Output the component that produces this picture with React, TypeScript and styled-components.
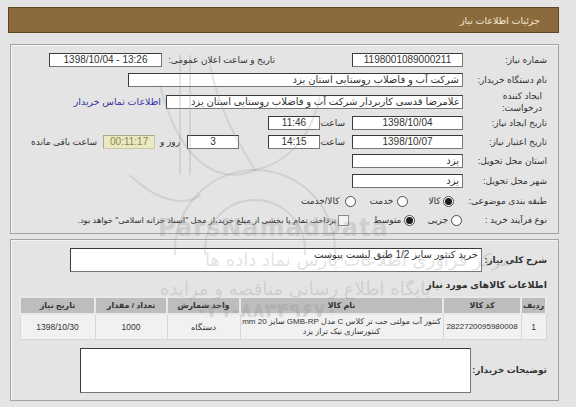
import React from "react";
import styled, { createGlobalStyle } from "styled-components";

const GlobalStyle = createGlobalStyle`
  html, body { margin: 0; padding: 0; background: #e4e4e4; }
  body {
    font-family: "Liberation Sans", "DejaVu Sans", Tahoma, sans-serif;
    font-size: 9px;
    color: #333;
  }
  * { box-sizing: border-box; }
`;

const Page = styled.div`
  position: relative;
  width: 576px;
  height: 407px;
  padding: 7px 17px 0 8px;
  direction: rtl;
  overflow: hidden;
`;

const Header = styled.div`
  height: 26px;
  background: #8b6b3e;
  border: 1px solid #5f4626;
  color: #f3ead6;
  display: flex;
  align-items: center;
  padding-right: 18px;
  font-size: 9.5px;
`;

const Panel = styled.div<{ $mt: number; $pt: number; $pb: number }>`
  margin-top: ${(p) => p.$mt}px;
  margin-left: 2px;
  border: 1px solid #a3a3a3;
  box-shadow: inset 1px 1px 0 #f4f4f4;
  padding: ${(p) => p.$pt}px 11px ${(p) => p.$pb}px 10px;
`;

const Row = styled.div<{ $h: number; $mt?: number }>`
  display: flex;
  align-items: center;
  height: ${(p) => p.$h}px;
  margin-top: ${(p) => p.$mt ?? 0}px;
`;

const Label = styled.div<{ $w?: number; $mr?: number; $bold?: boolean }>`
  flex: none;
  ${(p) => (p.$w ? `width: ${p.$w}px;` : "")}
  margin-right: ${(p) => p.$mr ?? 0}px;
  text-align: right;
  white-space: nowrap;
  line-height: 12px;
  font-weight: ${(p) => (p.$bold ? "bold" : "normal")};
  color: #333;
`;

const TwoLine = styled.div`
  flex: none;
  width: 84px;
  padding-right: 5px;
  text-align: right;
  line-height: 12px;
`;

const Field = styled.div<{
  $w: number;
  $h?: number;
  $mr?: number;
  $align?: "center" | "right" | "left";
  $ltr?: boolean;
  $tone?: "timer";
}>`
  flex: none;
  width: ${(p) => p.$w}px;
  height: ${(p) => p.$h ?? 14}px;
  margin-right: ${(p) => p.$mr ?? 0}px;
  background: ${(p) => (p.$tone === "timer" ? "#e9e9c3" : "#fff")};
  color: ${(p) => (p.$tone === "timer" ? "#8a8a4a" : "#333")};
  border: 1px solid ${(p) => (p.$tone === "timer" ? "#a9a98a" : "#3a3a3a")};
  border-bottom-color: ${(p) => (p.$tone === "timer" ? "#c9c9a9" : "#777")};
  border-right-color: ${(p) => (p.$tone === "timer" ? "#c9c9a9" : "#777")};
  font-size: 10px;
  line-height: 12px;
  text-align: ${(p) => p.$align ?? "center"};
  direction: ${(p) => (p.$ltr ? "ltr" : "rtl")};
  padding: 0 3px;
  white-space: nowrap;
  overflow: hidden;
`;

const Link = styled.a`
  flex: none;
  margin-right: 5px;
  color: #3434a6;
  text-decoration: none;
  white-space: nowrap;
  font-size: 9.5px;
`;

const Radio = styled.span<{ $on?: boolean; $mr?: number }>`
  flex: none;
  width: 11px;
  height: 11px;
  margin-right: ${(p) => p.$mr ?? 0}px;
  border-radius: 50%;
  border: 1px solid #4a4a4a;
  background: #fff;
  display: inline-flex;
  align-items: center;
  justify-content: center;
  &::after {
    content: "";
    width: 7px;
    height: 7px;
    border-radius: 50%;
    background: ${(p) => (p.$on ? "#1c1c1c" : "transparent")};
  }
`;

const Check = styled.span<{ $mr?: number }>`
  flex: none;
  width: 11px;
  height: 11px;
  margin-right: ${(p) => p.$mr ?? 0}px;
  border: 1px solid #8a8a8a;
  background: #f3f3f3;
`;

const Opt = styled.span<{ $mr?: number; $small?: boolean }>`
  flex: none;
  margin-right: ${(p) => p.$mr ?? 3}px;
  white-space: nowrap;
  font-size: ${(p) => (p.$small ? "8.3px" : "9px")};
`;

const Heading = styled.div`
  margin-top: 6px;
  height: 14px;
  line-height: 14px;
  font-weight: bold;
  font-size: 9.5px;
  text-align: right;
`;

const Table = styled.table`
  margin-top: 4px;
  width: 526px;
  table-layout: fixed;
  border-collapse: collapse;
  border: 1px solid #d2d2d2;
  font-size: 8.5px;
`;

const Th = styled.th<{ $w: number }>`
  width: ${(p) => p.$w}px;
  height: 17px;
  background: #bdbdbd;
  border: 2px solid #e9e9e9;
  font-weight: bold;
  font-size: 8px;
  color: #333;
  padding: 0;
  text-align: center;
  white-space: nowrap;
`;

const Td = styled.td<{ $small?: boolean }>`
  height: 25px;
  background: #f1f1f1;
  border: 1px solid #d6d6d6;
  text-align: center;
  padding: 0;
  line-height: 10px;
  font-size: ${(p) => (p.$small ? "8px" : "8.5px")};
  white-space: nowrap;
`;

const Watermark = styled.div`
  position: absolute;
  inset: 0;
  pointer-events: none;
`;

const WmText = styled.div<{ $x: number; $y: number; $size: number; $bold?: boolean; $ltr?: boolean }>`
  position: absolute;
  left: ${(p) => p.$x}px;
  top: ${(p) => p.$y}px;
  font-family: "DejaVu Sans", sans-serif;
  font-size: ${(p) => p.$size}px;
  font-weight: ${(p) => (p.$bold ? "bold" : "normal")};
  direction: ${(p) => (p.$ltr ? "ltr" : "rtl")};
  color: rgba(140, 140, 140, 0.26);
  white-space: nowrap;
  letter-spacing: ${(p) => (p.$ltr ? "1px" : "0")};
`;

const Logo = styled.svg`
  position: absolute;
  left: 120px;
  top: 55px;
`;

export default function App() {
  return (
    <>
      <GlobalStyle />
      <Page>
        <Header>جزئیات اطلاعات نیاز</Header>

        <Panel $mt={11} $pt={5} $pb={4}>
          <Row $h={20}>
            <Label $w={84}>شماره نیاز:</Label>
            <Field $w={111}>1198001089000211</Field>
            <Label $w={113} $mr={77}>تاریخ و ساعت اعلان عمومی:</Label>
            <Field $w={113} $ltr>1398/10/04 - 13:26</Field>
          </Row>
          <Row $h={20}>
            <Label $w={84}>نام دستگاه خریدار:</Label>
            <Field $w={335} $align="right">شرکت آب و فاضلاب روستایی استان یزد</Field>
          </Row>
          <Row $h={23}>
            <TwoLine>
              ایجاد کننده
              <br />
              درخواست:
            </TwoLine>
            <Field $w={297} $align="right">غلامرضا قدسی کاربردار شرکت آب و فاضلاب روستایی استان یزد</Field>
            <Link href="#">اطلاعات تماس خریدار</Link>
          </Row>
          <Row $h={20}>
            <Label $w={84}>تاریخ ایجاد نیاز:</Label>
            <Field $w={111}>1398/10/04</Field>
            <Label $w={22} $mr={7}>ساعت</Label>
            <Field $w={52} $mr={3}>11:46</Field>
          </Row>
          <Row $h={18}>
            <Label $w={84}>تاریخ اعتبار نیاز:</Label>
            <Field $w={111}>1398/10/07</Field>
            <Label $w={22} $mr={7}>ساعت</Label>
            <Field $w={52} $mr={3}>14:15</Field>
            <Field $w={52} $mr={29}>3</Field>
            <Label $mr={7}>روز و</Label>
            <Field $w={52} $mr={5} $tone="timer">00:11:17</Field>
            <Label $mr={6}>ساعت باقی مانده</Label>
          </Row>
          <Row $h={19}>
            <Label $w={84}>استان محل تحویل:</Label>
            <Field $w={111} $align="right">یزد</Field>
          </Row>
          <Row $h={21}>
            <Label $w={84}>شهر محل تحویل:</Label>
            <Field $w={111} $align="right">یزد</Field>
          </Row>
          <Row $h={20}>
            <Label>طبقه بندی موضوعی:</Label>
            <Radio $on $mr={15} />
            <Opt $mr={2}>کالا</Opt>
            <Radio $mr={20} />
            <Opt $mr={4}>خدمت</Opt>
            <Radio $mr={13} />
            <Opt $mr={6}>کالا/خدمت</Opt>
          </Row>
          <Row $h={18}>
            <Label>نوع فرآیند خرید :</Label>
            <Radio $mr={23} />
            <Opt $mr={3}>جزیی</Opt>
            <Radio $on $mr={12} />
            <Opt $mr={3}>متوسط</Opt>
            <Check $mr={24} />
            <Opt $mr={2} $small>پرداخت تمام یا بخشی از مبلغ خرید،از محل "اسناد خزانه اسلامی" خواهد بود.</Opt>
          </Row>
        </Panel>

        <Panel $mt={5} $pt={8} $pb={7}>
          <Row $h={24}>
            <Label $w={65} $bold>شرح کلی نیاز:</Label>
            <Field $w={412} $h={24} $align="right">
              خرید کنتور سایز 1/2 طبق لیست پیوست
            </Field>
          </Row>
          <Heading>اطلاعات کالاهای مورد نیاز</Heading>
          <Table>
            <thead>
              <tr>
                <Th $w={25}>ردیف</Th>
                <Th $w={78}>کد کالا</Th>
                <Th $w={203}>نام کالا</Th>
                <Th $w={73}>واحد شمارش</Th>
                <Th $w={72}>تعداد / مقدار</Th>
                <Th $w={75}>تاریخ نیاز</Th>
              </tr>
            </thead>
            <tbody>
              <tr>
                <Td>1</Td>
                <Td $small>2822720095980008</Td>
                <Td $small>
                  کنتور آب مولتی جت تر کلاس C مدل GMB-RP سایز 20 mm
                  <br />
                  کنتورسازی نیک تراز یزد
                </Td>
                <Td>دستگاه</Td>
                <Td>1000</Td>
                <Td>1398/10/30</Td>
              </tr>
            </tbody>
          </Table>
          <Row $h={45} $mt={8}>
            <Label $w={76} $bold>توضیحات خریدار:</Label>
            <Field $w={391} $h={45} />
          </Row>
        </Panel>

        <Watermark aria-hidden="true">
          <Logo width="230" height="200" viewBox="0 0 230 200">
            <g fill="none" stroke="rgba(140,140,140,0.22)" strokeWidth="2">
              <circle cx="135" cy="195" r="80" />
              <circle cx="135" cy="195" r="50" />
              <path d="M40 30 C 60 110, 100 130, 135 115" />
              <path d="M90 10 C 100 60, 120 90, 135 115" />
              <path d="M200 40 C 190 90, 160 110, 135 115" />
              <path d="M10 120 C 40 150, 70 150, 80 140" />
              <path d="M60 0 L 60 120" />
              <path d="M70 0 L 70 120" />
            </g>
          </Logo>
          <WmText $x={158} $y={214} $size={24} $bold $ltr>
            ParsNamadData
          </WmText>
          <WmText $x={205} $y={249} $size={18}>
            مرکز فراوری اطلاعات پارس نماد داده ها
          </WmText>
          <WmText $x={160} $y={278} $size={18}>
            پایگاه اطلاع رسانی مناقصه و مزایده
          </WmText>
          <WmText $x={195} $y={298} $size={20} $bold $ltr>
            ۰۲۱-۸۸۳۴۹۶۷۰
          </WmText>
        </Watermark>
      </Page>
    </>
  );
}
